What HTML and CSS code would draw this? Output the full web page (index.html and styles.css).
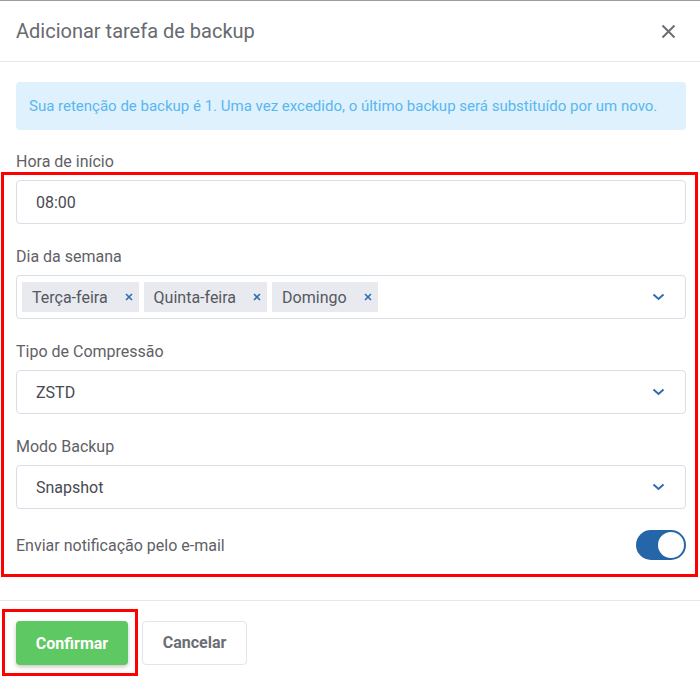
FILE: index.html
```html
<!DOCTYPE html>
<html lang="pt">
<head>
<meta charset="utf-8">
<title>Adicionar tarefa de backup</title>
<link rel="stylesheet" href="styles.css">
</head>
<body>
<div class="modal">
  <div class="modal-header">
    <h2 class="modal-title">Adicionar tarefa de backup</h2>
    <button class="close-btn" aria-label="Fechar">
      <svg width="15" height="15" viewBox="0 0 15 15"><path d="M1.5 1.5 L13.5 13.5 M13.5 1.5 L1.5 13.5" stroke="#6b6e75" stroke-width="2" fill="none"/></svg>
    </button>
  </div>
  <div class="modal-body">
    <div class="alert">Sua retenção de backup é 1. Uma vez excedido, o último backup será substituído por um novo.</div>
    <label class="field-label field-label-top">Hora de início</label>
    <div class="highlight">
      <div class="input">08:00</div>

      <label class="field-label">Dia da semana</label>
      <div class="input select multi">
        <div class="tags">
          <span class="tag">Terça-feira<span class="tag-x"><svg width="8" height="8" viewBox="0 0 8 8"><path d="M1 1 L7 7 M7 1 L1 7" stroke="#2d6cb0" stroke-width="1.6"/></svg></span></span>
          <span class="tag">Quinta-feira<span class="tag-x"><svg width="8" height="8" viewBox="0 0 8 8"><path d="M1 1 L7 7 M7 1 L1 7" stroke="#2d6cb0" stroke-width="1.6"/></svg></span></span>
          <span class="tag">Domingo<span class="tag-x"><svg width="8" height="8" viewBox="0 0 8 8"><path d="M1 1 L7 7 M7 1 L1 7" stroke="#2d6cb0" stroke-width="1.6"/></svg></span></span>
        </div>
        <svg class="chev" width="13" height="8" viewBox="0 0 13 8"><path d="M1.5 1.5 L6.5 6 L11.5 1.5" stroke="#2d6cb0" stroke-width="2" fill="none"/></svg>
      </div>

      <label class="field-label">Tipo de Compressão</label>
      <div class="input select">
        <span>ZSTD</span>
        <svg class="chev" width="13" height="8" viewBox="0 0 13 8"><path d="M1.5 1.5 L6.5 6 L11.5 1.5" stroke="#2d6cb0" stroke-width="2" fill="none"/></svg>
      </div>

      <label class="field-label">Modo Backup</label>
      <div class="input select">
        <span>Snapshot</span>
        <svg class="chev" width="13" height="8" viewBox="0 0 13 8"><path d="M1.5 1.5 L6.5 6 L11.5 1.5" stroke="#2d6cb0" stroke-width="2" fill="none"/></svg>
      </div>

      <div class="notify-row">
        <span class="notify-label">Enviar notificação pelo e-mail</span>
        <span class="toggle"><span class="knob"></span></span>
      </div>
    </div>
  </div>
  <div class="modal-footer">
    <span class="btn-highlight"><button class="btn btn-primary">Confirmar</button></span>
    <button class="btn btn-default">Cancelar</button>
  </div>
</div>
</body>
</html>
```
FILE: styles.css
```css
* { box-sizing: border-box; }
html, body { margin: 0; padding: 0; background: #fff; }
body { font-family: Roboto, "Noto Sans", Arial, sans-serif; color: #555; }

.modal {
  width: 700px;
  height: 685px;
  border-top: 1px solid #9c9c9c;
  background: #fff;
}

.modal-header {
  height: 61px;
  padding: 0 16px;
  display: flex;
  align-items: center;
  justify-content: space-between;
  border-bottom: 1px solid #e6e6e6;
}
.modal-title {
  margin: 0;
  font-size: 20px;
  font-weight: 400;
  color: #676a70;
}
.close-btn {
  border: 0;
  background: none;
  padding: 0;
  width: 15px;
  height: 15px;
  margin-right: 8px;
  display: flex;
}

.modal-body { padding: 20px 14px 0 16px; }

.alert {
  height: 48px;
  line-height: 48px;
  padding: 0 13px;
  background: #dff1fc;
  color: #58b7f1;
  font-size: 15px;
  border-radius: 4px;
  margin-bottom: 22px;
}

.field-label {
  display: block;
  font-size: 16px;
  line-height: 20px;
  color: #5f6166;
  margin-bottom: 8px;
}
.field-label-top { margin-bottom: 0; }

.highlight {
  margin: 0 -12px 0 -15px;
  border: 3px solid #ff0000;
  padding: 5px 9px 14px 12px;
}

.input {
  height: 44px;
  border: 1px solid #dcdde6;
  border-radius: 4px;
  padding: 0 19px;
  display: flex;
  align-items: center;
  font-size: 16px;
  color: #474a50;
  margin-bottom: 23px;
}
.select { justify-content: space-between; padding-right: 20px; }
.multi { padding-left: 5px; }
.chev { display: block; flex: none; }

.tags { display: flex; gap: 5px; }
.tag {
  height: 30px;
  display: inline-flex;
  align-items: center;
  background: #e9eaef;
  padding: 0 6px 0 10px;
  font-size: 16px;
  color: #555860;
}
.tag-x {
  margin-left: 17px;
  display: flex;
  width: 8px;
}

.notify-row {
  height: 30px;
  margin-top: -2px;
  display: flex;
  align-items: center;
  justify-content: space-between;
}
.notify-label { font-size: 16px; color: #5f6166; }
.toggle {
  width: 50px;
  height: 30px;
  border-radius: 15px;
  background: #2566a9;
  display: flex;
  align-items: center;
  justify-content: flex-end;
  padding-right: 2px;
}
.knob {
  width: 26px;
  height: 26px;
  border-radius: 50%;
  background: #fff;
}

.modal-footer {
  margin-top: 23px;
  border-top: 1px solid #e8e8e8;
  padding: 8px 0 0 2px;
  display: flex;
  align-items: center;
  gap: 4px;
}
.btn-highlight {
  display: inline-flex;
  border: 3px solid #ff0000;
  padding: 9px 7px 8px 11px;
}
.btn {
  height: 44px;
  font-family: Roboto, "Noto Sans", Arial, sans-serif;
  font-size: 16px;
  font-weight: 700;
  border-radius: 4px;
  cursor: pointer;
}
.btn-primary {
  width: 112px;
  background: #5ec862;
  color: #fff;
  border: 0;
  box-shadow: 0 2px 4px rgba(0, 0, 0, 0.22);
}
.btn-default {
  width: 105px;
  background: #fff;
  color: #6b6e75;
  border: 1px solid #e3e4ea;
}
```
